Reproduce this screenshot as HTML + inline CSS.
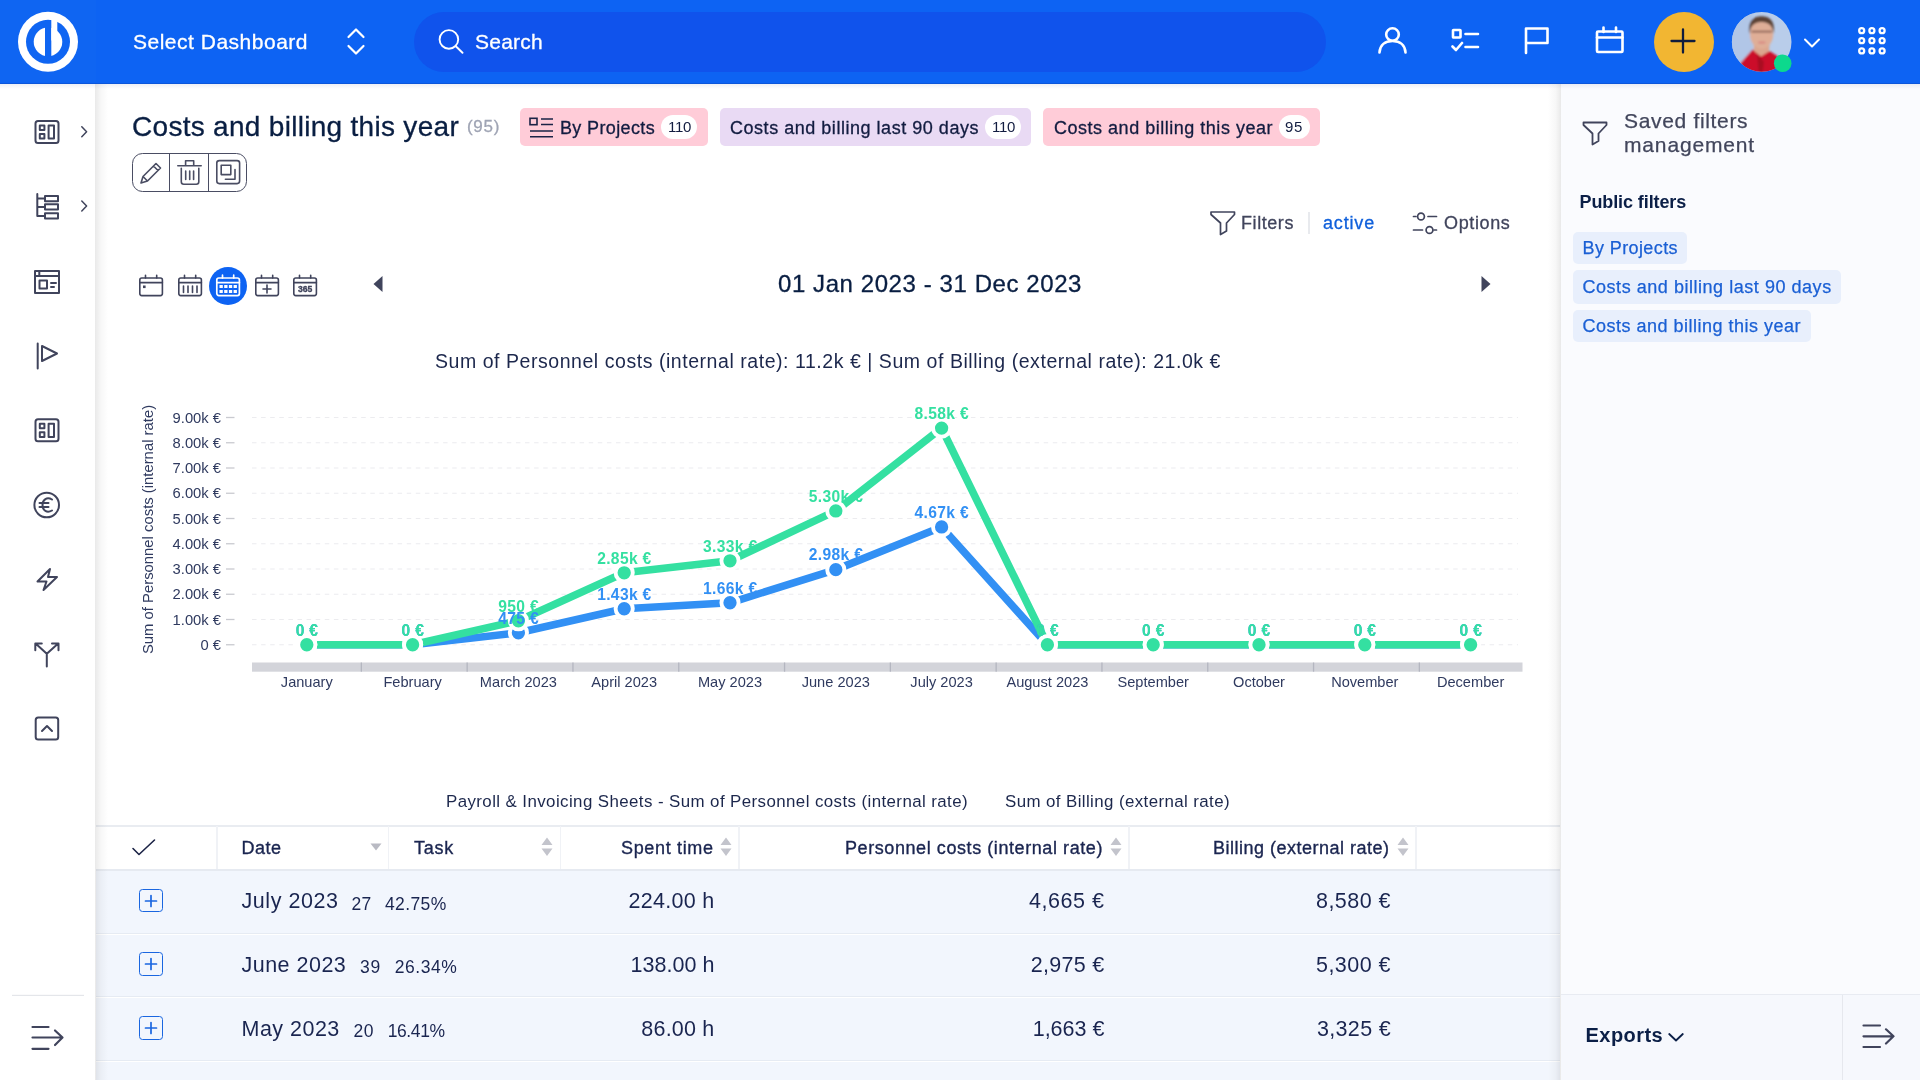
<!DOCTYPE html>
<html lang="en">
<head>
<meta charset="utf-8">
<title>Costs and billing this year</title>
<style>
*{box-sizing:border-box;margin:0;padding:0}
html,body{width:1920px;height:1080px;overflow:hidden;background:#fff}
body{font-family:"Liberation Sans",sans-serif;color:#0b1f47;position:relative}
.abs{position:absolute}
.t{position:absolute;white-space:nowrap;line-height:1;opacity:.999}
svg{position:absolute;overflow:visible;opacity:.999}
.ic{fill:none;stroke:#40445c;stroke-width:2;stroke-linecap:round;stroke-linejoin:round}
.icw{fill:none;stroke:#fff;stroke-width:2.6;stroke-linecap:round;stroke-linejoin:round}
/* header */
#hdr{left:0;top:0;width:1920px;height:83.6px;background:#0d63f3;border-bottom:1.2px solid #0c56da}
#hdrlogo{left:0;top:0;width:96px;height:82.4px;background:#0f65f2}
#search{left:414px;top:12px;width:912px;height:60px;border-radius:30px;background:#1053ec}
/* sidebar */
#side{left:0;top:83px;width:96px;height:997px;background:#fff}
#sideshadow{left:94.5px;top:83px;width:13px;height:997px;background:linear-gradient(90deg,rgba(0,0,0,.085),rgba(0,0,0,.03) 45%,rgba(0,0,0,0))}
/* right panel */
#rp{left:1561px;top:83px;width:359px;height:997px;background:#fafbfe}
#rpshadow{left:1548px;top:83px;width:13px;height:997px;background:linear-gradient(270deg,rgba(0,0,0,.085),rgba(0,0,0,.03) 40%,rgba(0,0,0,0))}
#hdrshadow{left:0;top:84px;width:1920px;height:5px;background:linear-gradient(180deg,rgba(20,40,120,.07),rgba(30,40,80,0))}
/*LS-START*/
#h_sel{letter-spacing:0.504px}
#h_search{letter-spacing:0.242px}
#m_title{letter-spacing:0.295px}
#m_cnt{letter-spacing:0.691px}
#tg1{letter-spacing:0.361px}
#tg1n{letter-spacing:-0.307px}
#tg2{letter-spacing:0.529px}
#tg2n{letter-spacing:-0.307px}
#tg3{letter-spacing:0.514px}
#tg3n{letter-spacing:0.656px}
#f_fil{letter-spacing:0.571px}
#f_act{letter-spacing:0.828px}
#f_opt{letter-spacing:0.636px}
#m_date{letter-spacing:0.578px}
#c_title{letter-spacing:0.546px}
#c_leg1{letter-spacing:0.407px}
#c_leg2{letter-spacing:0.396px}
#th1{letter-spacing:0.492px}
#th2{letter-spacing:0.746px}
#th3{letter-spacing:0.665px}
#th4{letter-spacing:0.577px}
#th5{letter-spacing:0.501px}
#r1a{letter-spacing:0.550px}
#r1b{letter-spacing:0.266px}
#r1c{letter-spacing:0.390px}
#r1d{letter-spacing:0.287px}
#r1e{letter-spacing:0.524px}
#r1f{letter-spacing:0.467px}
#r2a{letter-spacing:0.485px}
#r2b{letter-spacing:0.766px}
#r2c{letter-spacing:0.573px}
#r2d{letter-spacing:0.037px}
#r2e{letter-spacing:0.267px}
#r2f{letter-spacing:0.467px}
#r3a{letter-spacing:0.485px}
#r3b{letter-spacing:0.666px}
#r3c{letter-spacing:-0.393px}
#r3d{letter-spacing:0.209px}
#r3e{letter-spacing:-0.005px}
#r3f{letter-spacing:0.324px}
#rp_h1{letter-spacing:0.672px}
#rp_h2{letter-spacing:0.842px}
#rp_pf{letter-spacing:-0.095px}
#rp_c1{letter-spacing:0.406px}
#rp_c2{letter-spacing:0.535px}
#rp_c3{letter-spacing:0.496px}
#rp_ex{letter-spacing:0.462px}
/*LS-END*/
</style>
</head>
<body>
<!-- ===== main area ===== -->
<div id="main" class="abs" style="left:96px;top:83px;width:1464px;height:997px;background:#fff"></div>


<div class="t" id="m_title" style="left:132px;top:113px;font-size:28px;color:#091e42;-webkit-text-stroke:0.3px #091e42">Costs and billing this year</div>
<div class="t" id="m_cnt" style="left:467px;top:118px;font-size:17px;color:#9fa4b4;-webkit-text-stroke:0.3px #9fa4b4">(95)</div>
<!-- tags -->
<div class="abs" style="left:520px;top:108px;width:188px;height:38px;border-radius:5px;background:#ffccd8"></div>
<svg style="left:529px;top:117px" width="25" height="22" viewBox="0 0 25 22"><g fill="none" stroke="#1b2346" stroke-width="1.6"><rect x="1" y="1.3" width="7" height="6.4"/><path d="M12 2 H24 M12 7.5 H24 M1 14 H24 M1 19.7 H24"/></g></svg>
<div class="t" id="tg1" style="margin-top:1px;-webkit-text-stroke:0.3px #121c40;left:560px;top:118px;font-size:18px;color:#121c40">By Projects</div>
<div class="abs" style="left:661px;top:115px;width:36px;height:24px;border-radius:12px;background:#fff"></div>
<div class="t" id="tg1n" style="margin-top:-1px;left:668px;top:120px;font-size:15px;color:#121c40">110</div>

<div class="abs" style="left:720px;top:108px;width:311px;height:38px;border-radius:5px;background:#e9daf4"></div>
<div class="t" id="tg2" style="margin-top:1px;-webkit-text-stroke:0.3px #121c40;left:730px;top:118px;font-size:18px;color:#121c40">Costs and billing last 90 days</div>
<div class="abs" style="left:985px;top:115px;width:36px;height:24px;border-radius:12px;background:#fff"></div>
<div class="t" id="tg2n" style="margin-top:-1px;left:992px;top:120px;font-size:15px;color:#121c40">110</div>

<div class="abs" style="left:1043px;top:108px;width:277px;height:38px;border-radius:5px;background:#ffccd8"></div>
<div class="t" id="tg3" style="margin-top:1px;-webkit-text-stroke:0.3px #121c40;left:1054px;top:118px;font-size:18px;color:#121c40">Costs and billing this year</div>
<div class="abs" style="left:1279px;top:115px;width:31px;height:24px;border-radius:12px;background:#fff"></div>
<div class="t" id="tg3n" style="margin-top:-1px;left:1285px;top:120px;font-size:15px;color:#121c40">95</div>

<!-- button group -->
<div class="abs" style="left:132px;top:153.4px;width:115.2px;height:38.3px;border:1.5px solid #4a4d63;border-radius:10.5px"></div>
<div class="abs" style="left:168.6px;top:153.4px;width:1.5px;height:38.3px;background:#4a4d63"></div>
<div class="abs" style="left:207.5px;top:153.4px;width:1.5px;height:38.3px;background:#4a4d63"></div>
<svg style="left:138px;top:160px" width="26" height="26" viewBox="0 0 26 26"><path class="ic" style="stroke-width:1.6;stroke:#4a4d63" d="M3 23 L5 16.5 L18 3.5 L22.5 8 L9.5 21 Z M15.5 6 L20 10.5 M5 16.5 L9.5 21"/></svg>
<svg style="left:176px;top:159px" width="28" height="28" viewBox="0 0 28 28"><path class="ic" style="stroke-width:1.6;stroke:#4a4d63" d="M1.8 6.8 H25.2 M9.6 6.8 V1.8 H17.7 V6.8 M5.3 9.2 V22.7 Q5.3 25.2 7.800 25.2 H20.300 Q22.800 25.200 22.800 22.700 V9.200 M9.700 12 V20.500 M13.700 12 V20.500 M17.600 12 V20.500"/></svg>
<svg style="left:215px;top:159.300px" width="26" height="26" viewBox="0 0 26 26"><rect class="ic" style="stroke-width:1.600;stroke:#4a4d63" x="1.800" y="1.600" width="22.800" height="23" rx="2.500"/><rect class="ic" style="stroke-width:1.600;stroke:#4a4d63" x="6.200" y="6.200" width="9.600" height="9.400"/><path class="ic" style="stroke-width:1.600;stroke:#4a4d63" d="M20 10.500 V20.200 H10.400"/></svg>

<!-- filters row -->
<svg style="left:1209px;top:209px" width="28" height="28" viewBox="0 0 28 28"><path class="ic" style="stroke-width:1.7" d="M2 3 H25.500 V5.500 L17.500 14 V22 L11.500 25.500 V14 L2 5.500 Z"/></svg>
<div class="t" id="f_fil" style="-webkit-text-stroke:0.3px #40445c;left:1241px;top:214px;font-size:18px;color:#40445c">Filters</div>
<div class="abs" style="left:1308px;top:212px;width:2px;height:22px;background:#e8eaee"></div>
<div class="t" id="f_act" style="-webkit-text-stroke:0.3px #0e5fdb;left:1323px;top:214px;font-size:18px;color:#0e5fdb">active</div>
<svg style="left:1411px;top:210px" width="28" height="28" viewBox="0 0 28 28"><g class="ic" style="stroke-width:1.7"><circle cx="10" cy="6.500" r="3.400"/><path d="M2.500 6.500 H5 M17 6.500 H25.500"/><circle cx="18.500" cy="20" r="3.400"/><path d="M2.500 20 H11.500 M23 20 H25.500"/></g></svg>
<div class="t" id="f_opt" style="-webkit-text-stroke:0.3px #40445c;left:1444px;top:214px;font-size:18px;color:#40445c">Options</div>

<!-- calendar period icons -->
<svg style="left:137px;top:272px" width="28" height="26" viewBox="0 0 28 26"><g class="ic" style="stroke-width:1.6"><rect x="2.8" y="6" width="22.6" height="17.6" rx="2"/><path d="M2.8 10.6 H25.4 M8.5 3.2 V6 M19.7 3.2 V6"/></g><rect x="6" y="13.500" width="2.600" height="2.600" fill="#40445c"/></svg>
<svg style="left:176px;top:272px" width="28" height="26" viewBox="0 0 28 26"><g class="ic" style="stroke-width:1.6"><rect x="2.8" y="6" width="22.6" height="17.6" rx="2"/><path d="M2.8 10.6 H25.4 M8.5 3.2 V6 M19.7 3.2 V6 M7.500 14 V20.500 M12 14 V20.500 M16.500 14 V20.500 M21 14 V20.500"/></g></svg>
<div class="abs" style="left:209px;top:266.6px;width:38.4px;height:38.4px;border-radius:50%;background:#0d63f3"></div>
<svg style="left:214px;top:272px" width="28" height="26" viewBox="0 0 28 26"><g fill="none" stroke="#fff" stroke-width="1.7" stroke-linecap="round" stroke-linejoin="round"><rect x="2.8" y="6" width="22.6" height="17.6" rx="2"/><path d="M2.8 10.6 H25.4 M8.5 3.2 V6 M19.7 3.2 V6"/></g><g fill="#fff"><rect x="5.500" y="13" width="3.300" height="3"/><rect x="10.200" y="13" width="3.300" height="3"/><rect x="14.900" y="13" width="3.300" height="3"/><rect x="19.600" y="13" width="3.300" height="3"/><rect x="5.500" y="18" width="3.300" height="3"/><rect x="10.200" y="18" width="3.300" height="3"/><rect x="14.900" y="18" width="3.300" height="3"/><rect x="19.600" y="18" width="3.300" height="3"/></g></svg>
<svg style="left:253px;top:272px" width="28" height="26" viewBox="0 0 28 26"><g class="ic" style="stroke-width:1.6"><rect x="2.8" y="6" width="22.6" height="17.6" rx="2"/><path d="M2.8 10.6 H25.4 M8.5 3.2 V6 M19.7 3.2 V6 M14 13 V21 M10 17 H18"/></g></svg>
<svg style="left:291px;top:272px" width="28" height="26" viewBox="0 0 28 26"><g class="ic" style="stroke-width:1.6"><rect x="2.8" y="6" width="22.6" height="17.6" rx="2"/><path d="M2.8 10.6 H25.4 M8.5 3.2 V6 M19.7 3.2 V6"/></g><text x="14.1" y="20.2" text-anchor="middle" font-family="Liberation Sans,sans-serif" font-weight="bold" font-size="8.6" fill="#40445c" stroke="#40445c" stroke-width="0.35">365</text></svg>
<svg style="left:372px;top:275px" width="12" height="18" viewBox="0 0 12 18"><path d="M10.500 1 V17 L1.500 9 Z" fill="#40445c"/></svg>
<svg style="left:1480px;top:275px" width="12" height="18" viewBox="0 0 12 18"><path d="M1.500 1 V17 L10.500 9 Z" fill="#40445c"/></svg>
<div class="t" id="m_date" style="-webkit-text-stroke:0.3px #091e42;left:778px;top:272px;font-size:24px;color:#091e42">01 Jan 2023 - 31 Dec 2023</div>
<!--MAIN-TOP-->
<!--CHART-BEGIN-->
<svg id="chart" style="left:96px;top:340px" width="1464" height="480" viewBox="96 340 1464 480" font-family="Liberation Sans, sans-serif">
<text id="c_title" x="828" y="367.5" text-anchor="middle" font-size="19.5" fill="#1c274c">Sum of Personnel costs (internal rate): 11.2k € | Sum of Billing (external rate): 21.0k €</text>
<line x1="252" x2="1518" y1="644.75" y2="644.75" stroke="#ececef" stroke-width="1.1" stroke-dasharray="4.5 4.6"/>
<line x1="226" x2="234.5" y1="644.75" y2="644.75" stroke="#c9cad0" stroke-width="1.3"/>
<text x="221" y="649.85" text-anchor="end" font-size="14.75" fill="#2f3a5f">0 €</text>
<line x1="252" x2="1518" y1="619.50" y2="619.50" stroke="#ececef" stroke-width="1.1" stroke-dasharray="4.5 4.6"/>
<line x1="226" x2="234.5" y1="619.50" y2="619.50" stroke="#c9cad0" stroke-width="1.3"/>
<text x="221" y="624.60" text-anchor="end" font-size="14.75" fill="#2f3a5f">1.00k €</text>
<line x1="252" x2="1518" y1="594.25" y2="594.25" stroke="#ececef" stroke-width="1.1" stroke-dasharray="4.5 4.6"/>
<line x1="226" x2="234.5" y1="594.25" y2="594.25" stroke="#c9cad0" stroke-width="1.3"/>
<text x="221" y="599.35" text-anchor="end" font-size="14.75" fill="#2f3a5f">2.00k €</text>
<line x1="252" x2="1518" y1="569.00" y2="569.00" stroke="#ececef" stroke-width="1.1" stroke-dasharray="4.5 4.6"/>
<line x1="226" x2="234.5" y1="569.00" y2="569.00" stroke="#c9cad0" stroke-width="1.3"/>
<text x="221" y="574.10" text-anchor="end" font-size="14.75" fill="#2f3a5f">3.00k €</text>
<line x1="252" x2="1518" y1="543.75" y2="543.75" stroke="#ececef" stroke-width="1.1" stroke-dasharray="4.5 4.6"/>
<line x1="226" x2="234.5" y1="543.75" y2="543.75" stroke="#c9cad0" stroke-width="1.3"/>
<text x="221" y="548.85" text-anchor="end" font-size="14.75" fill="#2f3a5f">4.00k €</text>
<line x1="252" x2="1518" y1="518.50" y2="518.50" stroke="#ececef" stroke-width="1.1" stroke-dasharray="4.5 4.6"/>
<line x1="226" x2="234.5" y1="518.50" y2="518.50" stroke="#c9cad0" stroke-width="1.3"/>
<text x="221" y="523.60" text-anchor="end" font-size="14.75" fill="#2f3a5f">5.00k €</text>
<line x1="252" x2="1518" y1="493.25" y2="493.25" stroke="#ececef" stroke-width="1.1" stroke-dasharray="4.5 4.6"/>
<line x1="226" x2="234.5" y1="493.25" y2="493.25" stroke="#c9cad0" stroke-width="1.3"/>
<text x="221" y="498.35" text-anchor="end" font-size="14.75" fill="#2f3a5f">6.00k €</text>
<line x1="252" x2="1518" y1="468.00" y2="468.00" stroke="#ececef" stroke-width="1.1" stroke-dasharray="4.5 4.6"/>
<line x1="226" x2="234.5" y1="468.00" y2="468.00" stroke="#c9cad0" stroke-width="1.3"/>
<text x="221" y="473.10" text-anchor="end" font-size="14.75" fill="#2f3a5f">7.00k €</text>
<line x1="252" x2="1518" y1="442.75" y2="442.75" stroke="#ececef" stroke-width="1.1" stroke-dasharray="4.5 4.6"/>
<line x1="226" x2="234.5" y1="442.75" y2="442.75" stroke="#c9cad0" stroke-width="1.3"/>
<text x="221" y="447.85" text-anchor="end" font-size="14.75" fill="#2f3a5f">8.00k €</text>
<line x1="252" x2="1518" y1="417.50" y2="417.50" stroke="#ececef" stroke-width="1.1" stroke-dasharray="4.5 4.6"/>
<line x1="226" x2="234.5" y1="417.50" y2="417.50" stroke="#c9cad0" stroke-width="1.3"/>
<text x="221" y="422.60" text-anchor="end" font-size="14.75" fill="#2f3a5f">9.00k €</text>
<text id="c_ytitle" transform="translate(153,529.5) rotate(-90)" text-anchor="middle" font-size="14.85" fill="#2f3a5f">Sum of Personnel costs (internal rate)</text>
<rect x="252" y="662.5" width="1270.5" height="9.2" fill="#d3d4da"/>
<rect x="360.7" y="662.5" width="1.3" height="9.2" fill="#b4b6c0"/>
<rect x="466.5" y="662.5" width="1.3" height="9.2" fill="#b4b6c0"/>
<rect x="572.3" y="662.5" width="1.3" height="9.2" fill="#b4b6c0"/>
<rect x="678.1" y="662.5" width="1.3" height="9.2" fill="#b4b6c0"/>
<rect x="783.9" y="662.5" width="1.3" height="9.2" fill="#b4b6c0"/>
<rect x="889.7" y="662.5" width="1.3" height="9.2" fill="#b4b6c0"/>
<rect x="995.5" y="662.5" width="1.3" height="9.2" fill="#b4b6c0"/>
<rect x="1101.3" y="662.5" width="1.3" height="9.2" fill="#b4b6c0"/>
<rect x="1207.1" y="662.5" width="1.3" height="9.2" fill="#b4b6c0"/>
<rect x="1312.9" y="662.5" width="1.3" height="9.2" fill="#b4b6c0"/>
<rect x="1418.7" y="662.5" width="1.3" height="9.2" fill="#b4b6c0"/>
<text x="306.8" y="686.8" text-anchor="middle" font-size="14.6" fill="#2f3a5f">January</text>
<text x="412.6" y="686.8" text-anchor="middle" font-size="14.6" fill="#2f3a5f">February</text>
<text x="518.4" y="686.8" text-anchor="middle" font-size="14.6" fill="#2f3a5f">March 2023</text>
<text x="624.2" y="686.8" text-anchor="middle" font-size="14.6" fill="#2f3a5f">April 2023</text>
<text x="730.0" y="686.8" text-anchor="middle" font-size="14.6" fill="#2f3a5f">May 2023</text>
<text x="835.8" y="686.8" text-anchor="middle" font-size="14.6" fill="#2f3a5f">June 2023</text>
<text x="941.6" y="686.8" text-anchor="middle" font-size="14.6" fill="#2f3a5f">July 2023</text>
<text x="1047.4" y="686.8" text-anchor="middle" font-size="14.6" fill="#2f3a5f">August 2023</text>
<text x="1153.2" y="686.8" text-anchor="middle" font-size="14.6" fill="#2f3a5f">September</text>
<text x="1259.0" y="686.8" text-anchor="middle" font-size="14.6" fill="#2f3a5f">October</text>
<text x="1364.8" y="686.8" text-anchor="middle" font-size="14.6" fill="#2f3a5f">November</text>
<text x="1470.6" y="686.8" text-anchor="middle" font-size="14.6" fill="#2f3a5f">December</text>
<polyline points="306.8,644.75 412.6,644.75 518.4,632.76 624.2,608.77 730.0,602.76 835.8,569.63 941.6,526.96 1047.4,644.75 1153.2,644.75 1259.0,644.75 1364.8,644.75 1470.6,644.75" fill="none" stroke="#3290f4" stroke-width="7.6" stroke-linejoin="round"/>
<polyline points="306.8,644.75 412.6,644.75 518.4,620.76 624.2,572.79 730.0,560.79 835.8,510.93 941.6,428.11 1047.4,644.75 1153.2,644.75 1259.0,644.75 1364.8,644.75 1470.6,644.75" fill="none" stroke="#34e0a1" stroke-width="7.6" stroke-linejoin="round"/>
<circle cx="306.8" cy="644.75" r="8.6" fill="#3290f4" stroke="#fff" stroke-width="3.9"/>
<circle cx="412.6" cy="644.75" r="8.6" fill="#3290f4" stroke="#fff" stroke-width="3.9"/>
<circle cx="518.4" cy="632.76" r="8.6" fill="#3290f4" stroke="#fff" stroke-width="3.9"/>
<circle cx="624.2" cy="608.77" r="8.6" fill="#3290f4" stroke="#fff" stroke-width="3.9"/>
<circle cx="730.0" cy="602.76" r="8.6" fill="#3290f4" stroke="#fff" stroke-width="3.9"/>
<circle cx="835.8" cy="569.63" r="8.6" fill="#3290f4" stroke="#fff" stroke-width="3.9"/>
<circle cx="941.6" cy="526.96" r="8.6" fill="#3290f4" stroke="#fff" stroke-width="3.9"/>
<circle cx="1047.4" cy="644.75" r="8.6" fill="#3290f4" stroke="#fff" stroke-width="3.9"/>
<circle cx="1153.2" cy="644.75" r="8.6" fill="#3290f4" stroke="#fff" stroke-width="3.9"/>
<circle cx="1259.0" cy="644.75" r="8.6" fill="#3290f4" stroke="#fff" stroke-width="3.9"/>
<circle cx="1364.8" cy="644.75" r="8.6" fill="#3290f4" stroke="#fff" stroke-width="3.9"/>
<circle cx="1470.6" cy="644.75" r="8.6" fill="#3290f4" stroke="#fff" stroke-width="3.9"/>
<circle cx="306.8" cy="644.75" r="8.6" fill="#34e0a1" stroke="#fff" stroke-width="3.9"/>
<circle cx="412.6" cy="644.75" r="8.6" fill="#34e0a1" stroke="#fff" stroke-width="3.9"/>
<circle cx="518.4" cy="620.76" r="8.6" fill="#34e0a1" stroke="#fff" stroke-width="3.9"/>
<circle cx="624.2" cy="572.79" r="8.6" fill="#34e0a1" stroke="#fff" stroke-width="3.9"/>
<circle cx="730.0" cy="560.79" r="8.6" fill="#34e0a1" stroke="#fff" stroke-width="3.9"/>
<circle cx="835.8" cy="510.93" r="8.6" fill="#34e0a1" stroke="#fff" stroke-width="3.9"/>
<circle cx="941.6" cy="428.11" r="8.6" fill="#34e0a1" stroke="#fff" stroke-width="3.9"/>
<circle cx="1047.4" cy="644.75" r="8.6" fill="#34e0a1" stroke="#fff" stroke-width="3.9"/>
<circle cx="1153.2" cy="644.75" r="8.6" fill="#34e0a1" stroke="#fff" stroke-width="3.9"/>
<circle cx="1259.0" cy="644.75" r="8.6" fill="#34e0a1" stroke="#fff" stroke-width="3.9"/>
<circle cx="1364.8" cy="644.75" r="8.6" fill="#34e0a1" stroke="#fff" stroke-width="3.9"/>
<circle cx="1470.6" cy="644.75" r="8.6" fill="#34e0a1" stroke="#fff" stroke-width="3.9"/>
<text x="307.0" y="635.55" text-anchor="middle" font-size="15.6" font-weight="bold" letter-spacing="0.35" fill="#3290f4">0 €</text>
<text x="412.8" y="635.55" text-anchor="middle" font-size="15.6" font-weight="bold" letter-spacing="0.35" fill="#3290f4">0 €</text>
<text x="518.6" y="623.56" text-anchor="middle" font-size="15.6" font-weight="bold" letter-spacing="0.35" fill="#3290f4">475 €</text>
<text x="624.4" y="599.57" text-anchor="middle" font-size="15.6" font-weight="bold" letter-spacing="0.35" fill="#3290f4">1.43k €</text>
<text x="730.2" y="593.56" text-anchor="middle" font-size="15.6" font-weight="bold" letter-spacing="0.35" fill="#3290f4">1.66k €</text>
<text x="836.0" y="560.43" text-anchor="middle" font-size="15.6" font-weight="bold" letter-spacing="0.35" fill="#3290f4">2.98k €</text>
<text x="941.8" y="517.76" text-anchor="middle" font-size="15.6" font-weight="bold" letter-spacing="0.35" fill="#3290f4">4.67k €</text>
<text x="1047.6" y="635.55" text-anchor="middle" font-size="15.6" font-weight="bold" letter-spacing="0.35" fill="#3290f4">0 €</text>
<text x="1153.4" y="635.55" text-anchor="middle" font-size="15.6" font-weight="bold" letter-spacing="0.35" fill="#3290f4">0 €</text>
<text x="1259.2" y="635.55" text-anchor="middle" font-size="15.6" font-weight="bold" letter-spacing="0.35" fill="#3290f4">0 €</text>
<text x="1365.0" y="635.55" text-anchor="middle" font-size="15.6" font-weight="bold" letter-spacing="0.35" fill="#3290f4">0 €</text>
<text x="1470.8" y="635.55" text-anchor="middle" font-size="15.6" font-weight="bold" letter-spacing="0.35" fill="#3290f4">0 €</text>
<text x="307.0" y="635.55" text-anchor="middle" font-size="15.6" font-weight="bold" letter-spacing="0.35" fill="#34e0a1">0 €</text>
<text x="412.8" y="635.55" text-anchor="middle" font-size="15.6" font-weight="bold" letter-spacing="0.35" fill="#34e0a1">0 €</text>
<text x="518.6" y="611.56" text-anchor="middle" font-size="15.6" font-weight="bold" letter-spacing="0.35" fill="#34e0a1">950 €</text>
<text x="624.4" y="563.59" text-anchor="middle" font-size="15.6" font-weight="bold" letter-spacing="0.35" fill="#34e0a1">2.85k €</text>
<text x="730.2" y="551.59" text-anchor="middle" font-size="15.6" font-weight="bold" letter-spacing="0.35" fill="#34e0a1">3.33k €</text>
<text x="836.0" y="501.73" text-anchor="middle" font-size="15.6" font-weight="bold" letter-spacing="0.35" fill="#34e0a1">5.30k €</text>
<text x="941.8" y="418.91" text-anchor="middle" font-size="15.6" font-weight="bold" letter-spacing="0.35" fill="#34e0a1">8.58k €</text>
<text x="1047.6" y="635.55" text-anchor="middle" font-size="15.6" font-weight="bold" letter-spacing="0.35" fill="#34e0a1">0 €</text>
<text x="1153.4" y="635.55" text-anchor="middle" font-size="15.6" font-weight="bold" letter-spacing="0.35" fill="#34e0a1">0 €</text>
<text x="1259.2" y="635.55" text-anchor="middle" font-size="15.6" font-weight="bold" letter-spacing="0.35" fill="#34e0a1">0 €</text>
<text x="1365.0" y="635.55" text-anchor="middle" font-size="15.6" font-weight="bold" letter-spacing="0.35" fill="#34e0a1">0 €</text>
<text x="1470.8" y="635.55" text-anchor="middle" font-size="15.6" font-weight="bold" letter-spacing="0.35" fill="#34e0a1">0 €</text>
<text id="c_leg1" x="446" y="807.3" font-size="16.9" fill="#1c274c">Payroll &amp; Invoicing Sheets - Sum of Personnel costs (internal rate)</text>
<text id="c_leg2" x="1005" y="807.3" font-size="16.9" fill="#1c274c">Sum of Billing (external rate)</text>
</svg>
<!--CHART-END-->
<!--CHART-->
<!--TABLE-BEGIN-->
<div class="abs" style="left:96px;top:825px;width:1464px;height:1.5px;background:#e9ecf1"></div>
<div class="abs" style="left:96px;top:869px;width:1464px;height:2px;background:#e6eaf1"></div>
<div class="abs" style="left:216px;top:826px;width:1.5px;height:43px;background:#f0f2f6"></div>
<div class="abs" style="left:387.5px;top:826px;width:1.5px;height:43px;background:#f0f2f6"></div>
<div class="abs" style="left:559.5px;top:826px;width:1.5px;height:43px;background:#f0f2f6"></div>
<div class="abs" style="left:738px;top:826px;width:1.5px;height:43px;background:#f0f2f6"></div>
<div class="abs" style="left:1128px;top:826px;width:1.5px;height:43px;background:#f0f2f6"></div>
<div class="abs" style="left:1415px;top:826px;width:1.5px;height:43px;background:#f0f2f6"></div>
<div class="abs" style="left:96px;top:871px;width:1464px;height:62px;background:#f2f6fd"></div>
<div class="abs" style="left:96px;top:934.5px;width:1464px;height:62.0px;background:#f2f6fd"></div>
<div class="abs" style="left:96px;top:998px;width:1464px;height:62px;background:#f2f6fd"></div>
<div class="abs" style="left:96px;top:1061.5px;width:1464px;height:18.5px;background:#f2f6fd"></div>
<div class="abs" style="left:96px;top:933px;width:1464px;height:1.3px;background:#e6ebf3"></div>
<div class="abs" style="left:96px;top:995.7px;width:1464px;height:1.3px;background:#e6ebf3"></div>
<div class="abs" style="left:96px;top:1060px;width:1464px;height:1.3px;background:#e6ebf3"></div>
<svg style="left:130px;top:836px" width="28" height="22" viewBox="0 0 28 22"><path d="M3 12.5 L9 18.5 L24.5 4" fill="none" stroke="#1b2346" stroke-width="1.6" stroke-linecap="round" stroke-linejoin="round"/></svg>
<div class="t" id="th1" style="left:241.5px;top:839px;font-size:18px;color:#1a2550;-webkit-text-stroke:0.35px #1a2550">Date</div>
<div class="t" id="th2" style="left:414px;top:839px;font-size:18px;color:#1a2550;-webkit-text-stroke:0.35px #1a2550">Task</div>
<div class="t" id="th3" style="left:621px;top:839px;font-size:18px;color:#1a2550;-webkit-text-stroke:0.35px #1a2550">Spent time</div>
<div class="t" id="th4" style="left:845px;top:839px;font-size:18px;color:#1a2550;-webkit-text-stroke:0.35px #1a2550">Personnel costs (internal rate)</div>
<div class="t" id="th5" style="left:1213px;top:839px;font-size:18px;color:#1a2550;-webkit-text-stroke:0.35px #1a2550">Billing (external rate)</div>
<svg style="left:368.500px;top:842px" width="14" height="10" viewBox="0 0 14 10"><path d="M1.500 1.500 H12.500 L7 8.500 Z" fill="#b9bac3"/></svg>
<svg style="left:540px;top:836px" width="14" height="22" viewBox="0 0 14 22"><path d="M7 1.500 L12.500 9 H1.500 Z M7 20 L12.500 12.500 H1.500 Z" fill="#c3c4cc"/></svg>
<svg style="left:719px;top:836px" width="14" height="22" viewBox="0 0 14 22"><path d="M7 1.500 L12.500 9 H1.500 Z M7 20 L12.500 12.500 H1.500 Z" fill="#c3c4cc"/></svg>
<svg style="left:1109px;top:836px" width="14" height="22" viewBox="0 0 14 22"><path d="M7 1.500 L12.500 9 H1.500 Z M7 20 L12.500 12.500 H1.500 Z" fill="#c3c4cc"/></svg>
<svg style="left:1396px;top:836px" width="14" height="22" viewBox="0 0 14 22"><path d="M7 1.500 L12.500 9 H1.500 Z M7 20 L12.500 12.500 H1.500 Z" fill="#c3c4cc"/></svg>
<div class="abs" style="left:139.2px;top:888.7px;width:23.6px;height:23.6px;border:1.8px solid #1a66e0;border-radius:3.5px"></div>
<svg style="left:139px;top:888.5px" width="24" height="24" viewBox="0 0 24 24"><path d="M12 6.500 V17.500 M6.500 12 H17.500" stroke="#1a66e0" stroke-width="1.700" stroke-linecap="round"/></svg>
<div class="t" id="r1a" style="left:241.500px;top:891px;font-size:21.5px;color:#1a2550">July 2023</div>
<div class="t" id="r1b" style="left:351.5px;top:895.5px;font-size:17.5px;color:#1a2550">27</div>
<div class="t" id="r1c" style="left:385px;top:895.5px;font-size:17.5px;color:#1a2550">42.75%</div>
<div class="t" id="r1d" style="left:628.6px;top:891px;font-size:21.5px;color:#1a2550">224.00 h</div>
<div class="t" id="r1e" style="left:1029px;top:891px;font-size:21.5px;color:#1a2550">4,665 €</div>
<div class="t" id="r1f" style="left:1316px;top:891px;font-size:21.5px;color:#1a2550">8,580 €</div>
<div class="abs" style="left:139.2px;top:952.2px;width:23.6px;height:23.6px;border:1.8px solid #1a66e0;border-radius:3.5px"></div>
<svg style="left:139px;top:952.0px" width="24" height="24" viewBox="0 0 24 24"><path d="M12 6.500 V17.500 M6.500 12 H17.500" stroke="#1a66e0" stroke-width="1.700" stroke-linecap="round"/></svg>
<div class="t" id="r2a" style="left:241.500px;top:954.5px;font-size:21.5px;color:#1a2550">June 2023</div>
<div class="t" id="r2b" style="left:360px;top:959px;font-size:17.5px;color:#1a2550">39</div>
<div class="t" id="r2c" style="left:394.7px;top:959px;font-size:17.5px;color:#1a2550">26.34%</div>
<div class="t" id="r2d" style="left:630.5px;top:954.5px;font-size:21.5px;color:#1a2550">138.00 h</div>
<div class="t" id="r2e" style="left:1030.8px;top:954.5px;font-size:21.5px;color:#1a2550">2,975 €</div>
<div class="t" id="r2f" style="left:1316px;top:954.5px;font-size:21.5px;color:#1a2550">5,300 €</div>
<div class="abs" style="left:139.2px;top:1016.2px;width:23.6px;height:23.6px;border:1.8px solid #1a66e0;border-radius:3.5px"></div>
<svg style="left:139px;top:1016.0px" width="24" height="24" viewBox="0 0 24 24"><path d="M12 6.500 V17.500 M6.500 12 H17.500" stroke="#1a66e0" stroke-width="1.700" stroke-linecap="round"/></svg>
<div class="t" id="r3a" style="left:241.500px;top:1018.5px;font-size:21.5px;color:#1a2550">May 2023</div>
<div class="t" id="r3b" style="left:353.4px;top:1023px;font-size:17.5px;color:#1a2550">20</div>
<div class="t" id="r3c" style="left:387.7px;top:1023px;font-size:17.5px;color:#1a2550">16.41%</div>
<div class="t" id="r3d" style="left:641.3px;top:1018.5px;font-size:21.5px;color:#1a2550">86.00 h</div>
<div class="t" id="r3e" style="left:1032.7px;top:1018.5px;font-size:21.5px;color:#1a2550">1,663 €</div>
<div class="t" id="r3f" style="left:1317px;top:1018.5px;font-size:21.5px;color:#1a2550">3,325 €</div>
<!--TABLE-END-->
<!--TABLE-->

<!-- ===== sidebar ===== -->
<div id="side" class="abs"></div>
<div id="sideshadow" class="abs"></div>
<!--SIDE-BEGIN-->
<svg style="left:0;top:83px" width="96" height="997" viewBox="0 83 96 997"><g class="ic" style="stroke-width:2">
<rect x="35.5" y="121.0" width="23" height="22" rx="2.5"/><rect x="39.8" y="125.4" width="4.6" height="4.6"/><rect x="39.8" y="134.0" width="4.6" height="4.6"/><rect x="48.6" y="125.4" width="5.4" height="13.2"/>
<path d="M81.8 126.8 L86.6 131.8 L81.8 136.8" style="stroke-width:1.5"/>
<path d="M37.3 194 V216 H45 M37.3 198.600 H45 M37.3 207 H45"/>
<rect x="45" y="196" width="13" height="5.300"/><rect x="45" y="204.300" width="13" height="5.300"/><rect x="45" y="213.300" width="13" height="5.300"/>
<path d="M81.8 201 L86.600 206 L81.800 211" style="stroke-width:1.500"/>
<rect x="35" y="271" width="24" height="22"/><path d="M35 276 H59 M39.300 271 V276"/><rect x="39.500" y="280.500" width="7.500" height="8"/><path d="M51 283 H56 M51 287 H54"/>
<path d="M37.700 343.500 V368.500 M42 346 L57 353.500 L42 361 Z"/>
<rect x="35.5" y="419.3" width="23" height="22" rx="2.5"/><rect x="39.8" y="423.7" width="4.6" height="4.6"/><rect x="39.8" y="432.3" width="4.6" height="4.6"/><rect x="48.6" y="423.7" width="5.4" height="13.2"/>
<circle cx="46.700" cy="505" r="12.300"/><path d="M52 499.500 C47 496.500 42.500 499.500 42.500 505 C42.500 510.500 47 513.500 52 510.500 M39.500 503 H48.500 M39.500 507 H48.500"/>
<path d="M50 569 L37.500 581.500 H46.500 L43.500 590 L57 577 H48 Z"/>
<path d="M46.8 666.5 V653.8 L35.6 643.6 M46.8 653.8 L58.2 643.6 M35.3 650.3 V643.4 H41.8 M52 643.4 H58.5 V650.3"/>
<rect x="35.700" y="717.500" width="22.500" height="22" rx="2.500"/><path d="M42 731 L47 726 L52 731"/>
<path d="M32.500 1027 H48.500 M32.500 1037.500 H62 M55 1030.500 L62.500 1037.500 L55 1045 M32.500 1048.800 H48.500" style="stroke-width:2.200"/>
</g><rect x="12" y="994.800" width="72" height="1.200" fill="#e4e6ea"/></svg>
<!--SIDE-END-->
<!--SIDE-ICONS-->

<!-- ===== right panel ===== -->
<div id="rpshadow" class="abs"></div>
<div id="rp" class="abs"></div>
<!--RP-BEGIN-->
<svg style="left:1581px;top:119px" width="28" height="28" viewBox="0 0 28 28"><path class="ic" style="stroke-width:1.800" d="M2.500 3.500 H25.500 V6 L17.500 14.500 V22 L11.500 25.500 V14.500 L2.500 6 Z"/></svg>
<div class="t" id="rp_h1" style="-webkit-text-stroke:0.25px #42465c;left:1624px;top:110px;font-size:21px;color:#42465c">Saved filters</div>
<div class="t" id="rp_h2" style="-webkit-text-stroke:0.25px #42465c;left:1624px;top:134px;font-size:21px;color:#42465c">management</div>
<div class="t" id="rp_pf" style="left:1579.500px;top:193px;font-size:18px;font-weight:bold;color:#0b1f47">Public filters</div>
<div class="abs" style="left:1573px;top:232px;width:114px;height:31.5px;border-radius:5px;background:#e8effc"></div>
<div class="t" id="rp_c1" style="margin-top:1px;-webkit-text-stroke:0.25px #1a5fd4;left:1582.500px;top:238.25px;font-size:18px;color:#1a5fd4">By Projects</div>
<div class="abs" style="left:1573px;top:270px;width:268px;height:33.5px;border-radius:5px;background:#e8effc"></div>
<div class="t" id="rp_c2" style="margin-top:1px;-webkit-text-stroke:0.25px #1a5fd4;left:1582.500px;top:277.25px;font-size:18px;color:#1a5fd4">Costs and billing last 90 days</div>
<div class="abs" style="left:1573px;top:310px;width:237.5px;height:31.5px;border-radius:5px;background:#e8effc"></div>
<div class="t" id="rp_c3" style="margin-top:1px;-webkit-text-stroke:0.25px #1a5fd4;left:1582.500px;top:316.25px;font-size:18px;color:#1a5fd4">Costs and billing this year</div>
<div class="abs" style="left:1561px;top:994px;width:359px;height:86px;background:#f6f8fd;border-top:1.500px solid #e8ebf2"></div>
<div class="abs" style="left:1841.500px;top:995px;width:1.200px;height:85px;background:#e6e8ee"></div>
<div class="t" id="rp_ex" style="left:1585.500px;top:1025px;font-size:20px;font-weight:bold;color:#0b1f47">Exports</div>
<svg style="left:1666px;top:1030px" width="20" height="14" viewBox="0 0 20 14"><path class="ic" style="stroke:#0b1f47;stroke-width:1.800" d="M3.200 4 L10 10.500 L16.800 4"/></svg>
<svg style="left:1858px;top:1020px" width="40" height="32" viewBox="1858 1020 40 32"><path class="ic" style="stroke-width:2.200" d="M1863.500 1025.500 H1880 M1863.500 1036.300 H1893 M1886 1029.300 L1893.500 1036.300 L1886 1043.500 M1863.500 1047 H1880"/></svg>
<!--RP-END-->
<!--RP-->

<!-- ===== header ===== -->
<div id="hdr" class="abs"></div>
<div id="hdrlogo" class="abs"></div>
<div id="hdrshadow" class="abs"></div>
<div id="search" class="abs"></div>

<!-- logo -->
<svg style="left:0;top:0" width="96" height="83" viewBox="0 0 96 83">
 <circle cx="48" cy="41.8" r="30" fill="#fff"/>
 <circle cx="48" cy="41.8" r="22" fill="#0f65f2"/>
 <circle cx="48" cy="41.8" r="14.3" fill="#fff"/>
 <rect x="45" y="20" width="6.3" height="37" fill="#0f65f2"/>
 <rect x="51.3" y="18.5" width="6" height="22" fill="#fff"/>
</svg>
<div class="t" id="h_sel" style="-webkit-text-stroke:0.3px #fff;left:133px;top:31px;font-size:21px;color:#fff">Select Dashboard</div>
<svg style="left:345px;top:26px" width="22" height="32" viewBox="0 0 22 32"><path class="icw" style="stroke-width:2.2" d="M3.5 11 L11 3.5 L18.5 11 M3.5 20 L11 27.5 L18.5 20"/></svg>
<svg style="left:436px;top:26.3px" width="30" height="30" viewBox="0 0 30 30"><circle class="icw" style="stroke-width:1.9" cx="12.9" cy="13.4" r="9.3"/><path class="icw" style="stroke-width:1.9" d="M19.8 20.2 L26.5 26.8"/></svg>
<div class="t" id="h_search" style="-webkit-text-stroke:0.3px #fff;left:475px;top:31px;font-size:21px;color:#fff">Search</div>
<!-- user -->
<svg style="left:1376px;top:25px" width="32" height="32" viewBox="0 0 32 32"><circle class="icw" cx="16.5" cy="9.5" r="6.3"/><path class="icw" d="M3.5 27.5 C4 20 9 16 16.5 16 C24 16 29 20 29.5 27.5"/></svg>
<!-- tasks -->
<svg style="left:1450px;top:27px" width="32" height="28" viewBox="0 0 32 28"><rect class="icw" x="3" y="3" width="7.5" height="7.5" rx="0.5"/><path class="icw" d="M15.5 7 H28 M15.5 20 H28 M2.5 19.5 L6 23 L12 16"/></svg>
<!-- flag -->
<svg style="left:1522px;top:25px" width="30" height="32" viewBox="0 0 30 32"><path class="icw" d="M4 28 V3.5 H25.5 V18 H4"/></svg>
<!-- calendar -->
<svg style="left:1594px;top:25px" width="32" height="32" viewBox="0 0 32 32"><rect class="icw" x="3" y="6.5" width="25.5" height="20.5" rx="1"/><path class="icw" d="M3 12.5 H28.5 M9.5 2.5 V7 M22 2.5 V7"/></svg>
<!-- plus -->
<div class="abs" style="left:1653.7px;top:12px;width:60px;height:60px;border-radius:50%;background:#f2b632"></div>
<svg style="left:1653.4px;top:10.6px" width="60" height="60" viewBox="0 0 60 60"><path d="M30 18.500 V41.500 M18.500 30 H41.500" fill="none" stroke="#101c3d" stroke-width="2.3" stroke-linecap="round"/></svg>
<!-- avatar -->
<svg style="left:1731px;top:12px" width="62" height="62" viewBox="0 0 62 62">
 <defs><clipPath id="avc"><circle cx="30.7" cy="29.9" r="29.8"/></clipPath>
 <filter id="avb" x="-10%" y="-10%" width="120%" height="120%"><feGaussianBlur stdDeviation="0.9"/></filter></defs>
 <g clip-path="url(#avc)">
  <rect x="0" y="0" width="62" height="62" fill="#b9cdea"/>
  <g filter="url(#avb)">
   <rect x="-2" y="-2" width="24" height="66" fill="#b1c6e7"/>
   <path d="M5 56 L21.5 37.5 L30 41 L38.5 39 L47 44.5 L50 64 L2 64 Z" fill="#cc0f2b"/>
   <path d="M26 42 L33 50 L31 64 L28 64 Z" fill="#a90d24"/>
   <path d="M22.5 30 L23 39 L30 44.5 L38 39.5 L38.5 30 Z" fill="#dba68e"/>
   <ellipse cx="30.6" cy="22" rx="11.6" ry="14.8" fill="#dfae97"/>
   <path d="M18.3 22 C16.5 8 23 4.2 30.5 4.2 C38 4.2 44.5 8 42.8 22 C41.5 14.5 39 10.2 30.5 10 C22 10.2 19.5 14.500 18.300 22 Z" fill="#5b4236"/>
   <path d="M20.5 19.6 H41 " stroke="#6a4438" stroke-width="1.7" fill="none" opacity=".8"/>
   <ellipse cx="30.8" cy="30.5" rx="4" ry="1.3" fill="#d98d85"/>
  </g>
 </g>
 <circle cx="51.7" cy="51.2" r="8.8" fill="#0cd98d"/>
</svg>
<svg style="left:1802px;top:36px" width="20" height="14" viewBox="0 0 20 14"><path class="icw" style="stroke-width:2" d="M3 3.5 L10 10.5 L17 3.5"/></svg>
<!-- grid -->
<svg style="left:1855px;top:24px" width="34" height="34" viewBox="0 0 34 34"><g fill="none" stroke="#fff" stroke-width="2.3"><circle cx="6.7" cy="6.7" r="2.5"/><circle cx="16.9" cy="6.7" r="2.5"/><circle cx="27.1" cy="6.7" r="2.5"/><circle cx="6.7" cy="16.7" r="2.5"/><circle cx="16.9" cy="16.7" r="2.5"/><circle cx="27.1" cy="16.7" r="2.5"/><circle cx="6.7" cy="26.9" r="2.5"/><circle cx="16.9" cy="26.9" r="2.5"/><circle cx="27.1" cy="26.9" r="2.5"/></g></svg>
<!--HDR-->
</body>
</html>
